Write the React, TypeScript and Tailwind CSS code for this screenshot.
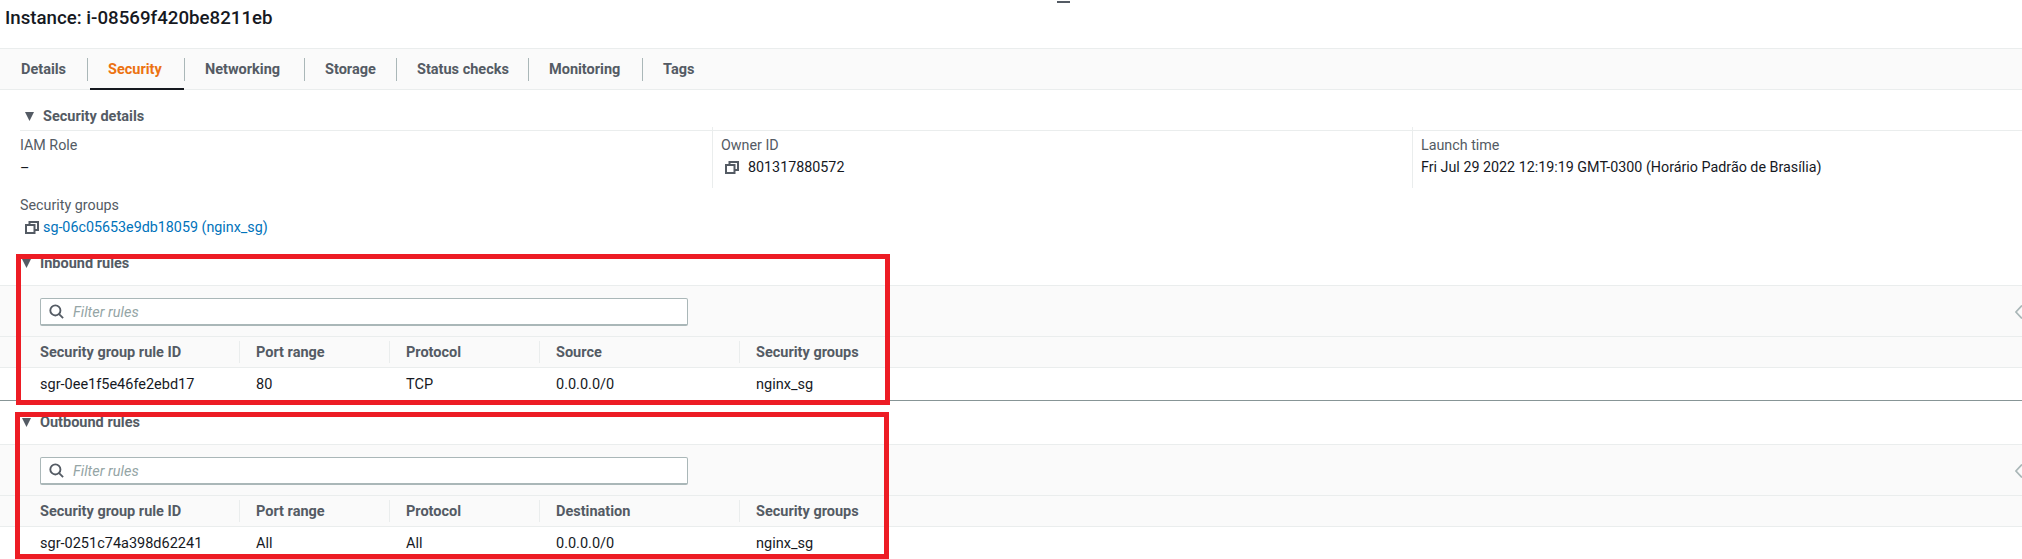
const tabs = [
  { label: 'Details', width: 'w-[87px]' },
  { label: 'Security', width: 'w-[97px]' },
  { label: 'Networking', width: 'w-[120px]' },
  { label: 'Storage', width: 'w-[92px]' },
  { label: 'Status checks', width: 'w-[132px]' },
  { label: 'Monitoring', width: 'w-[114px]' },
  { label: 'Tags', width: 'w-[70px]' },
];

const columnsClass = 'grid grid-cols-[199px_150px_150px_200px_1fr] pl-[40px]';

interface RulesSectionProps {
  title: string;
  peerLabel: string;
  row: string[];
  divider?: boolean;
  boxClass: string;
}

function Caret({ className }: { className: string }) {
  return (
    <svg viewBox="0 0 10 9" className={className} fill="#545b64" preserveAspectRatio="none">
      <polygon points="0,0 10,0 5,9" />
    </svg>
  );
}

function CopyIcon() {
  return (
    <svg viewBox="0 0 14 13" className="w-[14px] h-[13px] shrink-0" fill="none" stroke="#545b64" strokeWidth="2">
      <rect x="1" y="4" width="8.5" height="8" />
      <path d="M4.5 4V1H13v8H9.5" />
    </svg>
  );
}

function RulesSection({ title, peerLabel, row, divider, boxClass }: RulesSectionProps) {
  const headers = ['Security group rule ID', 'Port range', 'Protocol', peerLabel, 'Security groups'];

  return (
    <section className={`relative ${divider ? 'border-b border-[#879596]' : ''}`}>
      <div className="h-[43px] flex items-center pl-[22px] gap-[9px]">
        <Caret className="w-[9px] h-[9px]" />
        <h3 className="text-[14.5px] font-bold text-[#545b64]">{title}</h3>
      </div>

      <div className="h-[52px] bg-[#fafafa] border-y border-[#eaeded] flex items-start justify-between pt-[12px] pl-[40px]">
        <div className="w-[648px] h-[28px] bg-white border border-[#aab7b8] border-b-2 rounded-[2px] flex items-center pl-[8px] gap-[9px]">
          <svg viewBox="0 0 16 16" className="w-[15px] h-[15px]" fill="none" stroke="#545b64" strokeWidth="2">
            <circle cx="6.8" cy="6.8" r="5.4" />
            <path d="M10.8 10.8 15 15" />
          </svg>
          <span className="text-[14.5px] italic text-[#95a5a6] pt-[2px]">Filter rules</span>
        </div>
        <svg viewBox="0 0 7 14" className="w-[7px] h-[14px] mt-[7px]" fill="none" stroke="#aab7b8" strokeWidth="1.8">
          <path d="M7 .5.9 7 7 13.5" />
        </svg>
      </div>

      <div className={`${columnsClass} h-[31px] bg-[#fafafa] border-b border-[#eaeded] items-center`}>
        {headers.map((header, index) => (
          <div
            key={header}
            className={`text-[14.5px] font-bold text-[#545b64] pt-[1px] ${index > 0 ? 'border-l border-[#eaeded] pl-[16px]' : ''}`}
          >
            {header}
          </div>
        ))}
      </div>

      <div className={`${columnsClass} h-[32px] items-center pt-[2px]`}>
        {row.map((cell, index) => (
          <div key={index} className={`text-[14.5px] text-[#16191f] ${index > 0 ? 'pl-[17px]' : ''}`}>
            {cell}
          </div>
        ))}
      </div>

      <div className={`absolute border-[5px] border-[#ed1c24] pointer-events-none ${boxClass}`} />
    </section>
  );
}

export default function App() {
  return (
    <div className="relative h-[559px] overflow-hidden bg-white font-['Roboto',sans-serif]">
      <div className="absolute left-[1057px] top-[1px] w-[13px] h-[2px] bg-[#545b64]" />

      <header className="h-[48px] flex items-center pl-[5px] pb-[12px]">
        <h1 className="text-[18.7px] font-medium text-[#16191f]">Instance: i-08569f420be8211eb</h1>
      </header>

      <nav className="h-[42px] bg-[#fafafa] border-y border-[#eaeded] flex items-center">
        {tabs.map((tab, index) => (
          <div key={tab.label} className={`flex items-center h-full shrink-0 ${tab.width}`}>
            {index > 0 && <div className="w-px h-[23px] bg-[#aab7b8] shrink-0" />}
            <div
              className={`relative h-full grow flex items-center pt-[2px] text-[14.5px] font-bold ${
                tab.label === 'Security' ? 'text-[#ec7211]' : 'text-[#545b64]'
              } ${index === 0 ? 'pl-[21px]' : 'pl-[20px]'}`}
            >
              {tab.label}
              {tab.label === 'Security' && <div className="absolute left-[2px] right-0 -bottom-px h-[2px] bg-[#16191f]" />}
            </div>
          </div>
        ))}
      </nav>

      <section className="h-[152px] pt-[13px]">
        <div className="ml-[20px] h-[28px] border-b border-[#eaeded] flex items-center pl-[5px] gap-[9px]">
          <Caret className="w-[9px] h-[9px]" />
          <h3 className="text-[14.5px] font-bold text-[#545b64]">Security details</h3>
        </div>
        <div className="-mt-[4px] grid grid-cols-[712px_700px_1fr] items-start text-[14.3px]">
          <div className="h-[117px] pl-[20px] pt-[8px]">
            <div className="text-[#545b64] leading-[20px]">IAM Role</div>
            <div className="text-[#16191f] leading-[20px] mt-[3px]">–</div>
            <div className="text-[#545b64] leading-[20px] mt-[17px]">Security groups</div>
            <div className="flex items-center gap-[4px] pl-[5px] mt-[2px] leading-[20px]">
              <CopyIcon />
              <a className="text-[#0073bb]">sg-06c05653e9db18059 (nginx_sg)</a>
            </div>
          </div>
          <div className="h-[61px] border-l border-[#eaeded] pl-[8px] pt-[8px]">
            <div className="text-[#545b64] leading-[20px]">Owner ID</div>
            <div className="flex items-center gap-[9px] pl-[4px] mt-[2px] leading-[20px] text-[#16191f]">
              <CopyIcon />
              801317880572
            </div>
          </div>
          <div className="h-[61px] border-l border-[#eaeded] pl-[8px] pt-[8px]">
            <div className="text-[#545b64] leading-[20px]">Launch time</div>
            <div className="text-[#16191f] leading-[20px] mt-[2px]">Fri Jul 29 2022 12:19:19 GMT-0300 (Horário Padrão de Brasília)</div>
          </div>
        </div>
      </section>

      <RulesSection
        title="Inbound rules"
        peerLabel="Source"
        row={['sgr-0ee1f5e46fe2ebd17', '80', 'TCP', '0.0.0.0/0', 'nginx_sg']}
        divider
        boxClass="left-[16px] top-[12px] w-[874px] h-[151px]"
      />
      <RulesSection
        title="Outbound rules"
        peerLabel="Destination"
        row={['sgr-0251c74a398d62241', 'All', 'All', '0.0.0.0/0', 'nginx_sg']}
        boxClass="left-[15px] top-[11px] w-[874px] h-[147px]"
      />
    </div>
  );
}
